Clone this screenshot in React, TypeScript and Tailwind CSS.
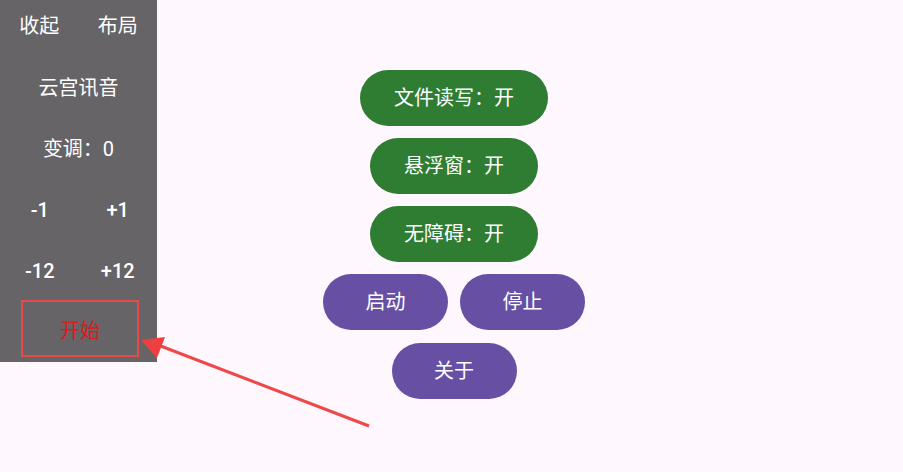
import React from "react";

const font = { fontFamily: 'Roboto, "Noto Sans CJK SC", sans-serif' };

const SideRow = ({ left, right, bold }: { left: string; right: string; bold?: boolean }) => (
  <div className={`grid grid-cols-2 h-[61px] items-center text-white ${bold ? "font-medium" : ""}`}>
    <span className="text-center pl-[1px]">{left}</span>
    <span className="text-center">{right}</span>
  </div>
);

const Pill = ({ label, tone, className = "" }: { label: string; tone: "green" | "purple"; className?: string }) => (
  <button
    className={`h-[56px] min-w-[125px] px-[34px] rounded-full text-white text-[20px] leading-none ${
      tone === "green" ? "bg-[#2e7d32]" : "bg-[#6750a4]"
    } ${className}`}
  >
    {label}
  </button>
);

export default function App() {
  return (
    <div className="relative w-[903px] h-[472px] bg-[#fef7fe] overflow-hidden text-[20px]" style={font}>
      <main className="flex flex-col items-center pt-[70px] gap-[12px] pl-[5px]">
        <Pill label="文件读写：开" tone="green" />
        <Pill label="悬浮窗：开" tone="green" />
        <Pill label="无障碍：开" tone="green" />
        <div className="flex gap-[12px]">
          <Pill label="启动" tone="purple" />
          <Pill label="停止" tone="purple" />
        </div>
        <Pill label="关于" tone="purple" className="mt-[1px]" />
      </main>

      {/* floating window */}
      <aside className="absolute left-0 top-0 w-[157px] h-[362px] bg-[#666466] flex flex-col">
        <div className="grid grid-cols-2 h-[57px] pb-[5px] items-center text-white">
          <span className="text-center">收起</span>
          <span className="text-center">布局</span>
        </div>
        <div className="h-[61px] flex items-center justify-center text-white">云宫讯音</div>
        <div className="h-[61px] flex items-center justify-center text-white">变调：0</div>
        <SideRow left="-1" right="+1" bold />
        <SideRow left="-12" right="+12" bold />
        <div className="-mt-[1px] ml-[21px] w-[118px] h-[57px] border-2 border-[#e84a4a] flex items-center justify-center pt-[4px] text-[#d81b1b]">
          开始
        </div>
      </aside>

      {/* annotation arrow */}
      <svg className="absolute inset-0 pointer-events-none" width="903" height="472">
        <line x1="369" y1="426" x2="158" y2="345" stroke="#ee4848" strokeWidth="3" />
        <polygon points="141,340 165,337 157,358" fill="#ee4040" />
      </svg>
    </div>
  );
}
